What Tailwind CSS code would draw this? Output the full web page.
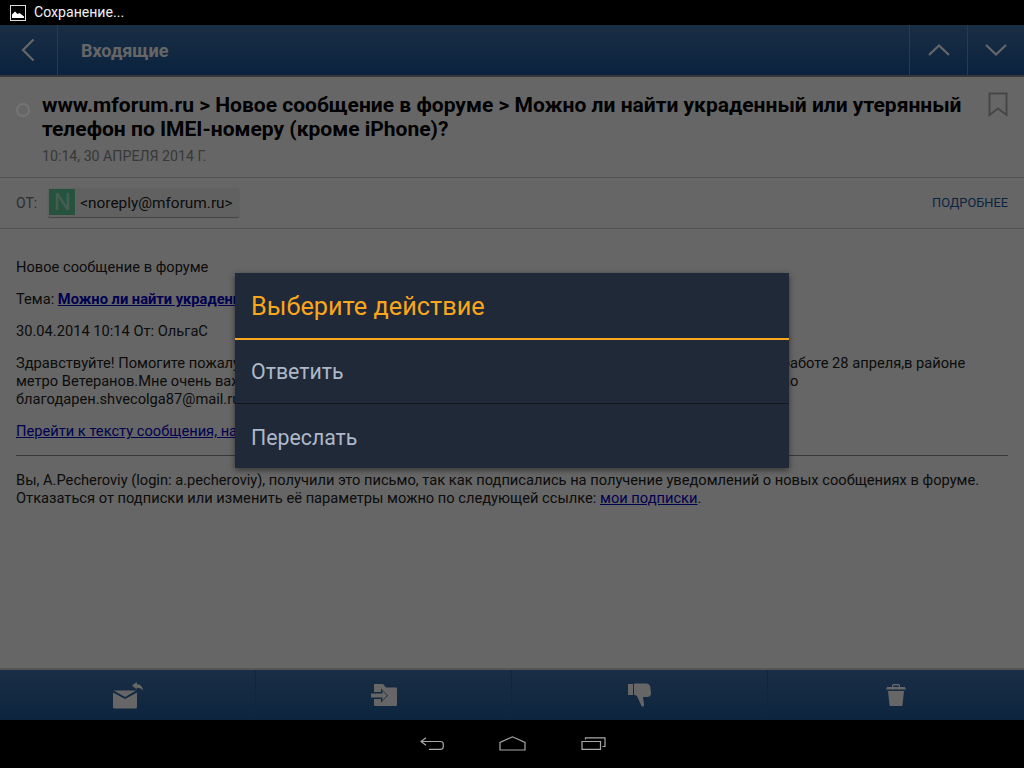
<!DOCTYPE html>
<html lang="ru">
<head>
    <meta charset="UTF-8">
    <title>Входящие</title>
    <script src="https://cdn.jsdelivr.net/npm/@tailwindcss/browser@4"></script>
</head>
<body class="bg-black font-['Roboto','Noto_Sans',sans-serif]">
    <div class="relative w-[1024px] h-[768px] overflow-hidden flex flex-col">
        <!-- status bar -->
        <div class="h-[25px] bg-black flex items-center pl-[10px] gap-[8px] text-[#f0f0f0] text-[14.100px] relative z-20">
            <svg width="16" height="16" viewBox="0 0 16 16">
                <rect x="0.5" y="0.5" width="15" height="15" fill="#000" stroke="#ddd"/>
                <path d="M2 13V9.5L5 6.5L7.5 9L9.5 8L14 11.5V13Z" fill="#fff"/>
            </svg>
            <span>Сохранение...</span>
        </div>

        <!-- screen under the dialog dim -->
        <div class="relative flex-1 flex flex-col bg-white min-h-0">
            <!-- top bar -->
            <div class="h-[50px] flex bg-gradient-to-b from-[#4274ad] to-[#19569c] border-b-[2px] border-[#8a8a8a] box-content">
                <div class="w-[58px] flex items-center justify-center border-r border-[#6f94bd] pr-[2px]">
                    <svg width="14" height="24" viewBox="0 0 14 24" fill="none" stroke="#fff" stroke-width="2.2"><path d="M12.5 1.5L2 12L12.5 22.5"/></svg>
                </div>
                <div class="flex-1 flex items-center pl-[23px] text-white text-[18px] font-bold">Входящие</div>
                <div class="w-[58px] flex items-center justify-center border-l border-[#6f94bd]">
                    <svg width="22" height="12" viewBox="0 0 22 12" fill="none" stroke="#fff" stroke-width="2.2"><path d="M1 11L11 1.5L21 11"/></svg>
                </div>
                <div class="w-[57px] flex items-center justify-center border-l border-[#6f94bd]">
                    <svg width="22" height="12" viewBox="0 0 22 12" fill="none" stroke="#fff" stroke-width="2.2"><path d="M1 1L11 10.5L21 1"/></svg>
                </div>
            </div>

            <!-- subject -->
            <div class="h-[101px] flex border-b border-[#d0d0d0] pl-[16px] pr-[16px] pt-[16px]">
                <div class="relative z-10 w-[14px] h-[14px] mt-[10px] rounded-full border-[2px] border-[#757575] shrink-0"></div>
                <div class="ml-[12px] flex-1">
                    <h1 class="text-[21.020px] leading-[24px] font-bold text-black">www.mforum.ru &gt; Новое сообщение в форуме &gt; Можно ли найти украденный или утерянный телефон по IMEI-номеру (кроме iPhone)?</h1>
                    <p class="text-[14.200px] leading-[18px] mt-[6px] text-[#8c8c8c]">10:14, 30 АПРЕЛЯ 2014 Г.</p>
                </div>
                <svg class="shrink-0 ml-[16px] -mt-[1px]" width="20" height="26" viewBox="0 0 20 26" fill="none" stroke="#b0b0b0" stroke-width="2"><path d="M1.5 1.5H18.500V23L10 16.500L1.5 23Z"/></svg>
            </div>

            <!-- sender -->
            <div class="h-[51px] flex items-center border-b border-[#d0d0d0] pl-[16px] pr-[16px]">
                <span class="text-[14px] text-[#737373]">ОТ:</span>
                <div class="ml-[11px] mb-[2px] h-[29px] flex items-center bg-[#f2f2f2] rounded-[2px] shadow-[0_1px_1px_rgba(0,0,0,0.35)] pr-[6px]">
                    <div class="w-[26px] h-[26px] ml-[1px] bg-[#5fd09c] text-[#b5e8d0] flex items-center justify-center text-[24px] leading-none">N</div>
                    <span class="ml-[5px] pt-[3px] text-[15.400px] text-[#222]">&lt;noreply@mforum.ru&gt;</span>
                </div>
                <a class="ml-auto text-[12.800px] text-[#195aa5]">ПОДРОБНЕЕ</a>
            </div>

            <!-- body -->
            <div class="flex-1 px-[16px] pt-[29px] text-[14.660px] leading-[18px] text-[#222]">
                <p>Новое сообщение в форуме</p>
                <p class="mt-[14px]">Тема: <a class="font-bold text-[#0000c8] underline">Можно ли найти украденный или утерянный телефон по IMEI-номеру (кроме iPhone)?</a></p>
                <p class="mt-[14px]">30.04.2014 10:14 От: ОльгаС</p>
                <p class="mt-[14px]">Здравствуйте! Помогите пожалуйста найти телефон,потеряла телефон samsung galaxy когда ехала сегодня на работе 28 апреля,в районе<br>метро Ветеранов.Мне очень важно его найти,там важные для меня данные и все контакты,буду вам бесконечно благодарен.shvecolga87@mail.ru</p>
                <p class="mt-[14px]"><a class="text-[#0000c8] underline">Перейти к тексту сообщения, на которое вы подписаны</a></p>
                <hr class="mt-[15px] border-[#8c8c8c]">
                <p class="mt-[15px]">Вы, A.Pecheroviy (login: a.pecheroviy), получили это письмо, так как подписались на получение уведомлений о новых сообщениях в форуме. Отказаться от подписки или изменить её параметры можно по следующей ссылке: <a class="text-[#0000c8] underline">мои подписки</a>.</p>
            </div>

            <!-- bottom toolbar -->
            <div class="h-[52px] flex bg-gradient-to-b from-[#4274ad] to-[#1f5c9e] border-t-[2px] border-[#d8d8d8]">
                <div class="w-[255px] flex items-center justify-center">
                    <svg width="30" height="27" viewBox="0 0 30 27">
                        <path d="M0 10.500L12 17L24 10.500V25A1.500 1.500 0 0 1 22.500 26.500H1.500A1.500 1.500 0 0 1 0 25Z" fill="#fff"/>
                        <path d="M0.800 8.500H23.200L12 15Z" fill="#fff"/>
                        <path d="M19 3.500L23.800 0V2.300C27 2.300 29.500 4 30 8.500C28.500 6.500 26.500 5.700 23.800 5.800V7.500Z" fill="#fff"/>
                    </svg>
                </div>
                <div class="w-[256px] flex items-center justify-center border-l border-[#2a5f9c]">
                    <svg width="26" height="22" viewBox="0 0 26 22">
                        <path d="M3 0H12L15 3.500H25A1 1 0 0 1 26 4.500V21A1 1 0 0 1 25 22H4A1 1 0 0 1 3 21V15H10V18.500L17 11.500L10 4.500V8H3Z" fill="#fff"/>
                        <path d="M0 9.500H11.500V6.500L16 11.500L11.500 16.500V13.500H0Z" fill="#fff"/>
                    </svg>
                </div>
                <div class="w-[256px] flex items-center justify-center border-l border-[#2a5f9c]">
                    <svg width="23" height="24" viewBox="0 0 23 24">
                        <path d="M0 1H5V12H0Z" fill="#fff"/>
                        <path d="M6 0.500H18C20.500 0.500 22 2 22.300 4L23 10.500C23 13 21.500 14 19 14H15L16 21.500C16 24 14.500 24 13.500 23L9 13L6 11.500Z" fill="#fff"/>
                    </svg>
                </div>
                <div class="w-[257px] flex items-center justify-center border-l border-[#2a5f9c]">
                    <svg width="20" height="22" viewBox="0 0 20 22">
                        <path d="M6 3V1.500C6 0.500 7 0 8 0H12C13 0 14 0.500 14 1.500V3H12.800V1.500H7.200V3Z" fill="#fff"/>
                        <path d="M1 3H19L20 5.500H0Z" fill="#fff"/>
                        <path d="M2 7H18L16.500 21C16.400 21.800 16 22 15.500 22H4.500C4 22 3.600 21.800 3.500 21Z" fill="#fff"/>
                    </svg>
                </div>
            </div>

            <!-- dim behind dialog -->
            <div class="absolute inset-0 bg-black/60"></div>

            <!-- dialog -->
            <div class="absolute left-[235px] top-[248px] w-[554px] h-[195px] bg-[#1f2937] shadow-[0_2px_6px_rgba(0,0,0,0.5)] flex flex-col">
                <div class="h-[65px] flex items-center pl-[16px] pt-[2px] text-[25.300px] text-[#f9a61c]">Выберите действие</div>
                <div class="h-[2px] bg-[#f9a61c]"></div>
                <div class="h-[64px] flex items-center pl-[16px] text-[21.300px] text-[#aeb8c8] border-b border-[#12161d]">Ответить</div>
                <div class="flex-1 flex items-center pl-[16px] pt-[3px] text-[21.300px] text-[#aeb8c8]">Переслать</div>
            </div>
        </div>

        <!-- nav bar -->
        <div class="h-[48px] bg-black flex items-center justify-center gap-[55px] pl-[2px] pb-[1px]">
            <svg width="24" height="13" viewBox="0 0 24 13" fill="none" stroke="#a8a8a8" stroke-width="1.200"><path d="M6 0.800L1 4.500L6 8.200M1 4.500H20.500C22.500 4.500 23.300 5.500 23.300 7V9.500C23.300 11 22.500 12.300 20.500 12.300H9"/></svg>
            <svg width="27" height="15" viewBox="0 0 27 15" fill="none" stroke="#a8a8a8" stroke-width="1.200"><path d="M1 14V6.500L13.500 0.800L26 6.500V14Z"/></svg>
            <svg width="25" height="13" viewBox="0 0 25 13" fill="none" stroke="#a8a8a8" stroke-width="1.200"><path d="M1 4.500H19.500V12.300H1Z"/><path d="M4.500 2.500V0.800H24V9.500H21.500"/></svg>
        </div>
    </div>
</body>
</html>
